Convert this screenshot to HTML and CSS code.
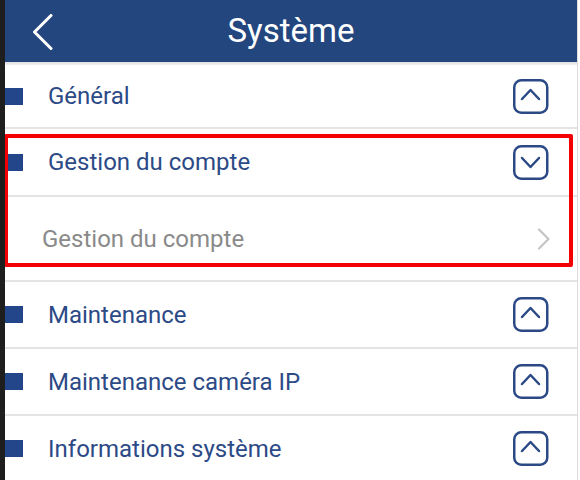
FILE: index.html
```html
<!DOCTYPE html>
<html lang="fr">
<head>
<meta charset="utf-8">
<title>Système</title>
<link rel="stylesheet" href="styles.css">
</head>
<body>
<div class="screen">
  <div class="edge"></div>
  <div class="app">
    <header class="topbar">
      <div class="back">
        <svg width="22" height="36" viewBox="0 0 22 36"><polyline points="19,1.5 2.5,18 19,34.5" fill="none" stroke="#fff" stroke-width="3" stroke-linecap="round" stroke-linejoin="round"/></svg>
      </div>
      <h1 class="title">Système</h1>
      <div></div>
    </header>
    <div class="shadow"></div>

    <div class="row row-first">
      <span class="bullet"></span>
      <span class="label">Général</span>
      <svg class="toggle" width="36" height="35" viewBox="0 0 36 35"><rect x="1.25" y="1.25" width="33" height="32.5" rx="7" fill="none" stroke="#2b4a85" stroke-width="2.5"/><polyline points="9,20 17.5,11 26,20" fill="none" stroke="#2b4a85" stroke-width="2.5" stroke-linecap="round" stroke-linejoin="round"/></svg>
    </div>

    <div class="group">
      <div class="row row-open">
        <span class="bullet"></span>
        <span class="label">Gestion du compte</span>
        <svg class="toggle" width="36" height="35" viewBox="0 0 36 35"><rect x="1.25" y="1.25" width="33" height="32.5" rx="7" fill="none" stroke="#2b4a85" stroke-width="2.5"/><polyline points="9,13 17.5,22 26,13" fill="none" stroke="#2b4a85" stroke-width="2.5" stroke-linecap="round" stroke-linejoin="round"/></svg>
      </div>
      <div class="subrow">
        <span class="sublabel">Gestion du compte</span>
        <svg class="arrow" width="14" height="22" viewBox="0 0 14 22"><polyline points="2,1.5 11.5,11 2,20.5" fill="none" stroke="#c4c4c4" stroke-width="2.2" stroke-linecap="round" stroke-linejoin="round"/></svg>
      </div>
      <div class="highlight"></div>
    </div>

    <div class="row">
      <span class="bullet"></span>
      <span class="label">Maintenance</span>
      <svg class="toggle" width="36" height="35" viewBox="0 0 36 35"><rect x="1.25" y="1.25" width="33" height="32.5" rx="7" fill="none" stroke="#2b4a85" stroke-width="2.5"/><polyline points="9,20 17.5,11 26,20" fill="none" stroke="#2b4a85" stroke-width="2.5" stroke-linecap="round" stroke-linejoin="round"/></svg>
    </div>
    <div class="row">
      <span class="bullet"></span>
      <span class="label">Maintenance caméra IP</span>
      <svg class="toggle" width="36" height="35" viewBox="0 0 36 35"><rect x="1.25" y="1.25" width="33" height="32.5" rx="7" fill="none" stroke="#2b4a85" stroke-width="2.5"/><polyline points="9,20 17.5,11 26,20" fill="none" stroke="#2b4a85" stroke-width="2.5" stroke-linecap="round" stroke-linejoin="round"/></svg>
    </div>
    <div class="row">
      <span class="bullet"></span>
      <span class="label">Informations système</span>
      <svg class="toggle" width="36" height="35" viewBox="0 0 36 35"><rect x="1.25" y="1.25" width="33" height="32.5" rx="7" fill="none" stroke="#2b4a85" stroke-width="2.5"/><polyline points="9,20 17.5,11 26,20" fill="none" stroke="#2b4a85" stroke-width="2.5" stroke-linecap="round" stroke-linejoin="round"/></svg>
    </div>
  </div>
</div>
</body>
</html>
```

FILE: styles.css
```css
* { box-sizing: border-box; }

html, body {
  margin: 0;
  padding: 0;
  background: #fff;
}

body {
  width: 580px;
  height: 480px;
  overflow: hidden;
  font-family: Roboto, "Noto Sans", "Liberation Sans", sans-serif;
}

.screen {
  display: flex;
  height: 480px;
}

.edge {
  width: 5px;
  flex: none;
  background: #1e1e1e;
}

.app {
  flex: none;
  width: 573px;
  border-right: 1px solid #dcdcdc;
  overflow: hidden;
}

.topbar {
  height: 62px;
  background: #23467f;
  display: grid;
  grid-template-columns: 1fr auto 1fr;
  align-items: center;
}

.back {
  padding-left: 27px;
  display: flex;
  align-items: center;
  padding-top: 1px;
}

.back svg { display: block; }

.title {
  margin: 0;
  color: #fff;
  font-weight: 400;
  font-size: 33px;
  line-height: 1;
  padding-bottom: 2px;
}

.shadow {
  height: 3px;
  background: linear-gradient(#dedede, #f2f2f2);
}

.row {
  height: 67px;
  display: flex;
  align-items: center;
  border-bottom: 2px solid #e4e4e4;
}

.row-first { height: 64px; }
.row-open { height: 68px; }

.bullet {
  width: 18px;
  height: 17px;
  background: #23458a;
  flex: none;
}

.label {
  margin-left: 25px;
  font-size: 24px;
  color: #2c4a86;
  flex: 1;
  white-space: nowrap;
}

.toggle {
  flex: none;
  display: block;
  margin-right: 28px;
}

.group {
  position: relative;
}

.subrow {
  height: 85px;
  display: flex;
  align-items: center;
  padding-left: 37px;
  border-bottom: 2px solid #e4e4e4;
}

.sublabel {
  flex: 1;
  font-size: 24px;
  color: #8a8a8a;
}

.arrow {
  display: block;
  margin-right: 26px;
}

.highlight {
  position: absolute;
  left: -1px;
  top: 5px;
  right: 4px;
  bottom: 15px;
  border: 4px solid #f50000;
  border-radius: 2px;
  pointer-events: none;
}
```
